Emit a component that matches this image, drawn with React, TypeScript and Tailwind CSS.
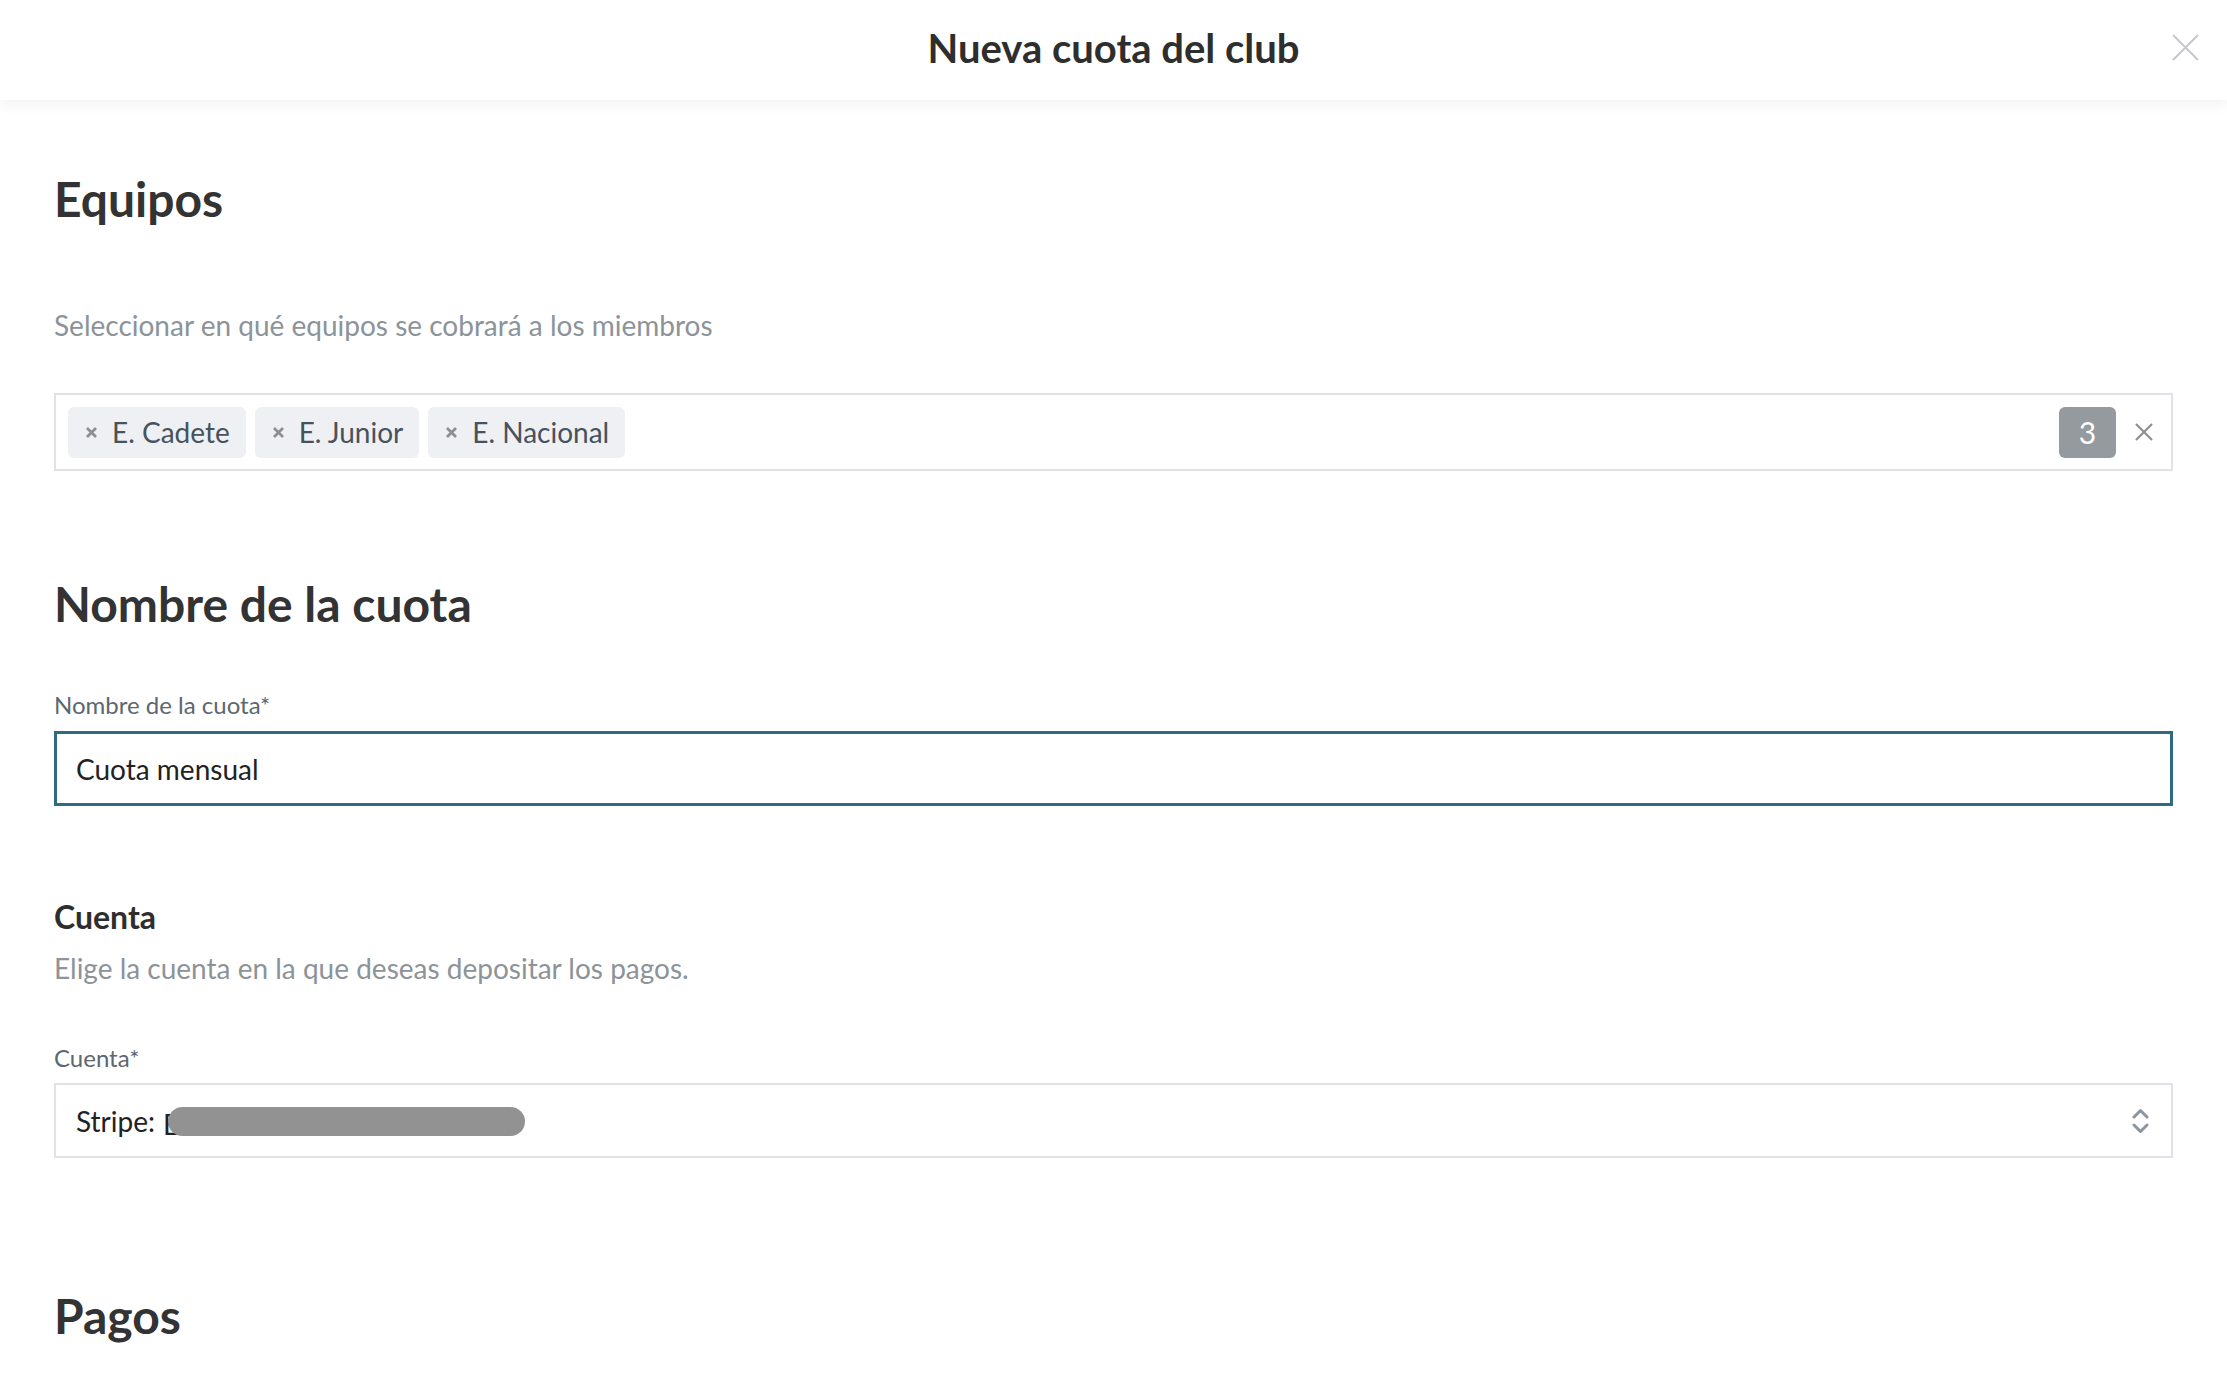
import React from "react";

const teams = ["E. Cadete", "E. Junior", "E. Nacional"];

const App = () => {
  return (
    <div className="w-full min-h-screen bg-white font-['Lato',sans-serif] text-[#333333]">
      {/* header */}
      <div className="relative h-[100px] bg-white flex justify-center shadow-[0_3px_14px_rgba(40,40,80,0.07)]">
        <h1 className="pt-[24px] text-[40px] leading-[48px] font-bold text-[#2e2e2e]">
          Nueva cuota del club
        </h1>
        <button className="absolute right-[28px] top-[33px] w-[28px] h-[28px] flex items-center justify-center">
          <svg width="27" height="27" viewBox="0 0 27 27" fill="none">
            <path d="M1 1L26 26M26 1L1 26" stroke="#c4c8cc" strokeWidth="2" />
          </svg>
        </button>
      </div>

      <div className="px-[54px] flex flex-col">
        {/* Equipos */}
        <h2 className="mt-[71px] text-[48px] leading-[56px] font-bold text-[#333333]">Equipos</h2>
        <p className="mt-[81px] text-[28px] leading-[34px] text-[#8c9399]">
          Seleccionar en qué equipos se cobrará a los miembros
        </p>
        <div className="mt-[51px] h-[78px] border-2 border-[#dfe2e6] flex items-center pl-[12px] pr-[18px]">
          <div className="flex gap-[9px] flex-1">
            {teams.map((team) => (
              <div
                key={team}
                className="h-[51px] rounded-[6px] bg-[#eff0f3] flex items-center pl-[17px] pr-[16px] gap-[14px]"
              >
                <svg width="13" height="13" viewBox="0 0 13 13" fill="none">
                  <path d="M2 2L11 11M11 2L2 11" stroke="#8b9094" strokeWidth="2.8" />
                </svg>
                <span className="text-[28px] leading-[36px] text-[#46525c]">{team}</span>
              </div>
            ))}
          </div>
          <div className="w-[57px] h-[51px] rounded-[6px] bg-[#959a9e] flex items-center justify-center text-white text-[30px]">
            3
          </div>
          <svg className="ml-[19px]" width="18" height="18" viewBox="0 0 18 18" fill="none">
            <path d="M1 1L17 17M17 1L1 17" stroke="#8a9095" strokeWidth="2.2" />
          </svg>
        </div>

        {/* Nombre */}
        <h2 className="mt-[105px] text-[48px] leading-[56px] font-bold text-[#333333]">Nombre de la cuota</h2>
        <label className="mt-[58px] text-[24px] leading-[30px] text-[#5c6770]">Nombre de la cuota*</label>
        <div className="mt-[11px] h-[75px] border-[3px] border-[#2f6b7e] flex items-center px-[19px] text-[28px] text-[#222222]">
          Cuota mensual
        </div>

        {/* Cuenta */}
        <h3 className="mt-[91px] text-[32px] leading-[40px] font-bold text-[#2e2e2e]">Cuenta</h3>
        <p className="mt-[14px] text-[28px] leading-[34px] text-[#8c9399]">
          Elige la cuenta en la que deseas depositar los pagos.
        </p>
        <label className="mt-[58px] text-[24px] leading-[30px] text-[#5c6770]">Cuenta*</label>
        <div className="mt-[10px] h-[75px] border-2 border-[#dfe2e6] flex items-center pl-[20px] pr-[22px]">
          <div className="flex-1 flex items-center text-[28px] text-[#222222]">
            <span>Stripe:</span>
            <span className="relative ml-[8px] inline-block w-[362px] h-[36px]">
              <span className="text-[28px] leading-[36px]">E</span>
              <span className="absolute left-[5px] top-[4px] w-[357px] h-[29px] rounded-full bg-[#929292]" />
            </span>
          </div>
          <svg width="17" height="28" viewBox="0 0 17 28" fill="none">
            <path d="M2 10L8.5 3.5L15 10" stroke="#8c959b" strokeWidth="3" strokeLinecap="round" strokeLinejoin="round" />
            <path d="M2 18L8.5 24.5L15 18" stroke="#8c959b" strokeWidth="3" strokeLinecap="round" strokeLinejoin="round" />
          </svg>
        </div>

        {/* Pagos */}
        <h2 className="mt-[130px] text-[48px] leading-[56px] font-bold text-[#333333]">Pagos</h2>
        <div className="h-[200px]" />
      </div>
    </div>
  );
};

export default App;
